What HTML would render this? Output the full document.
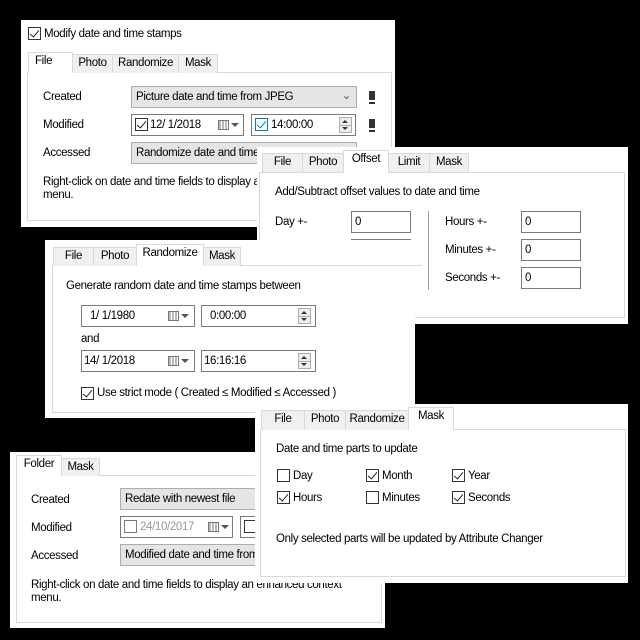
<!DOCTYPE html>
<html><head><meta charset="utf-8"><style>
*{box-sizing:border-box;margin:0;padding:0}
body{width:640px;height:640px;background:#000;position:relative;overflow:hidden;font-family:"Liberation Sans",sans-serif;font-size:11.5px;letter-spacing:-0.35px;color:#000}
.p{position:absolute;background:#fff}
.a{position:absolute;white-space:nowrap;line-height:14px}
.tab{position:absolute;background:#f0f0f0;border:1px solid #d9d9d9;border-bottom:none;text-align:center;line-height:17px;white-space:nowrap}
.tab.s{background:#fff;z-index:2;line-height:17px}
.box{position:absolute;border:1px solid #d9d9d9}
.cb{position:absolute;width:13px;height:13px;border:1px solid #333;background:#fff}
.cb.c::after{content:"";position:absolute;left:3px;top:0px;width:4px;height:8px;border:solid #222;border-width:0 1.3px 1.3px 0;transform:rotate(40deg)}
.cb.b{border-color:#0078d7}.cb.b.c::after{border-color:#0078d7}
.combo{position:absolute;background:#e5e5e5;border:1px solid #adadad;height:22px;line-height:20px;padding-left:4px;white-space:nowrap;overflow:hidden}
.inp{position:absolute;background:#fff;border:1px solid #7a7a7a;height:22px;line-height:20px;padding-left:4px;white-space:nowrap}
.cal{position:absolute;width:11px;height:10px;border:1px solid #777;background:repeating-linear-gradient(90deg,#bbb 0 2px,#fff 2px 3px)}
.tri{position:absolute;width:0;height:0;border-left:4px solid transparent;border-right:4px solid transparent;border-top:4px solid #555}
.spin{position:absolute;width:13px;height:16px;border:1px solid #adadad;background:#eee}
.spin::before{content:"";position:absolute;left:2px;top:2px;border-left:3px solid transparent;border-right:3px solid transparent;border-bottom:3px solid #333}
.spin::after{content:"";position:absolute;left:2px;top:9px;border-left:3px solid transparent;border-right:3px solid transparent;border-top:3px solid #333}
.spin i{position:absolute;left:0;right:0;top:7px;border-top:1px solid #adadad}
.mk{position:absolute;width:6px;height:11px;background:#333;border-bottom:2px solid #fff;box-shadow:0 2px 0 #333}
.num{position:absolute;border:1px solid #7a7a7a;background:#fff;width:60px;height:22px;line-height:20px;padding-left:3px}
</style></head><body>

<!-- Panel 1 -->
<div class="p" style="left:21px;top:20px;width:374px;height:207px"></div>
<div class="cb c" style="left:28px;top:27px"></div>
<div class="a" style="left:44px;top:27px">Modify date and time stamps</div>
<div class="box" style="left:27px;top:72px;width:365px;height:149px"></div>
<div class="tab s" style="left:28px;top:52px;width:45px;height:21px;text-align:left;padding-left:6px">File</div>
<div class="tab" style="left:72px;top:54px;width:41px;height:19px">Photo</div>
<div class="tab" style="left:112px;top:54px;width:67px;height:19px">Randomize</div>
<div class="tab" style="left:178px;top:54px;width:40px;height:19px">Mask</div>
<div class="a" style="left:43px;top:90px">Created</div>
<div class="combo" style="left:131px;top:86px;width:226px">Picture date and time from JPEG<span style="position:absolute;right:5px;top:-1px;color:#555">&#8964;</span></div>
<div class="mk" style="left:369px;top:91px"></div>
<div class="a" style="left:43px;top:118px">Modified</div>
<div class="inp" style="left:131px;top:114px;width:113px;padding-left:18px">12/ 1/2018</div>
<div class="cb c" style="left:135px;top:118px"></div>
<div class="cal" style="left:218px;top:120px"></div><div class="tri" style="left:231px;top:123px"></div>
<div class="inp" style="left:251px;top:114px;width:105px;padding-left:19px">14:00:00</div>
<div class="cb c b" style="left:255px;top:118px"></div>
<div class="spin" style="left:339px;top:117px"><i></i></div>
<div class="mk" style="left:369px;top:119px"></div>
<div class="a" style="left:43px;top:146px">Accessed</div>
<div class="combo" style="left:131px;top:142px;width:226px">Randomize date and time</div>
<div class="a" style="left:43px;top:176px;line-height:13px">Right-click on date and time fields to display an enhanced context<br>menu.</div>

<!-- Panel 2 Offset -->
<div class="p" style="left:257px;top:147px;width:371px;height:177px"></div>
<div class="box" style="left:259px;top:172px;width:366px;height:146px"></div>
<div class="tab" style="left:262px;top:153px;width:41px;height:19px">File</div>
<div class="tab" style="left:302px;top:153px;width:42px;height:19px">Photo</div>
<div class="tab s" style="left:343px;top:150px;width:46px;height:23px">Offset</div>
<div class="tab" style="left:388px;top:153px;width:42px;height:19px">Limit</div>
<div class="tab" style="left:429px;top:153px;width:40px;height:19px">Mask</div>
<div class="a" style="left:275px;top:185px">Add/Subtract offset values to date and time</div>
<div class="a" style="left:275px;top:215px">Day +-</div>
<div class="num" style="left:351px;top:211px">0</div>
<div class="num" style="left:351px;top:239px"></div>
<div style="position:absolute;left:428px;top:211px;width:1px;height:79px;background:#a0a0a0"></div>
<div class="a" style="left:445px;top:215px">Hours +-</div>
<div class="num" style="left:521px;top:211px">0</div>
<div class="a" style="left:445px;top:243px">Minutes +-</div>
<div class="num" style="left:521px;top:239px">0</div>
<div class="a" style="left:445px;top:271px">Seconds +-</div>
<div class="num" style="left:521px;top:267px">0</div>

<!-- Panel 3 Randomize -->
<div class="p" style="left:45px;top:240px;width:370px;height:178px"></div>
<div class="box" style="left:52px;top:265px;width:370px;height:148px;border-right:none"></div>
<div class="tab" style="left:53px;top:247px;width:41px;height:19px">File</div>
<div class="tab" style="left:93px;top:247px;width:44px;height:19px">Photo</div>
<div class="tab s" style="left:136px;top:244px;width:68px;height:22px">Randomize</div>
<div class="tab" style="left:203px;top:247px;width:38px;height:19px">Mask</div>
<div class="a" style="left:66px;top:279px">Generate random date and time stamps between</div>
<div class="inp" style="left:81px;top:305px;width:114px;padding-left:8px">1/ 1/1980</div>
<div class="cal" style="left:168px;top:311px"></div><div class="tri" style="left:181px;top:314px"></div>
<div class="inp" style="left:201px;top:305px;width:115px;padding-left:8px">0:00:00</div>
<div class="spin" style="left:298px;top:308px"><i></i></div>
<div class="a" style="left:81px;top:332px">and</div>
<div class="inp" style="left:81px;top:350px;width:114px;padding-left:2px">14/ 1/2018</div>
<div class="cal" style="left:168px;top:356px"></div><div class="tri" style="left:181px;top:359px"></div>
<div class="inp" style="left:201px;top:350px;width:115px;padding-left:2px">16:16:16</div>
<div class="spin" style="left:298px;top:353px"><i></i></div>
<div class="cb c" style="left:81px;top:387px"></div>
<div class="a" style="left:97px;top:386px">Use strict mode ( Created ≤ Modified ≤ Accessed )</div>

<!-- Panel 5 Folder -->
<div class="p" style="left:10px;top:452px;width:375px;height:176px"></div>
<div class="box" style="left:16px;top:475px;width:366px;height:148px"></div>
<div class="tab s" style="left:16px;top:455px;width:46px;height:21px">Folder</div>
<div class="tab" style="left:61px;top:458px;width:39px;height:18px">Mask</div>
<div class="a" style="left:31px;top:493px">Created</div>
<div class="combo" style="left:120px;top:488px;width:200px">Redate with newest file</div>
<div class="a" style="left:31px;top:521px">Modified</div>
<div class="inp" style="left:120px;top:516px;width:113px;padding-left:19px;color:#999">24/10/2017</div>
<div class="cb" style="left:124px;top:520px;border-color:#777"></div>
<div class="cal" style="left:208px;top:522px"></div><div class="tri" style="left:221px;top:525px"></div>
<div class="inp" style="left:240px;top:516px;width:60px"></div>
<div class="cb" style="left:244px;top:520px"></div>
<div class="a" style="left:31px;top:549px">Accessed</div>
<div class="combo" style="left:120px;top:544px;width:200px">Modified date and time from</div>
<div class="a" style="left:31px;top:579px;line-height:13px">Right-click on date and time fields to display an enhanced context<br>menu.</div>

<!-- Panel 4 Mask -->
<div class="p" style="left:255px;top:404px;width:373px;height:179px"></div>
<div class="box" style="left:260px;top:429px;width:366px;height:148px"></div>
<div class="tab" style="left:261px;top:410px;width:44px;height:20px">File</div>
<div class="tab" style="left:304px;top:410px;width:42px;height:20px">Photo</div>
<div class="tab" style="left:345px;top:410px;width:64px;height:20px">Randomize</div>
<div class="tab s" style="left:408px;top:407px;width:46px;height:23px">Mask</div>
<div class="a" style="left:276px;top:442px">Date and time parts to update</div>
<div class="cb" style="left:277px;top:469px"></div><div class="a" style="left:293px;top:469px">Day</div>
<div class="cb c" style="left:366px;top:469px"></div><div class="a" style="left:382px;top:469px">Month</div>
<div class="cb c" style="left:452px;top:469px"></div><div class="a" style="left:468px;top:469px">Year</div>
<div class="cb c" style="left:277px;top:491px"></div><div class="a" style="left:293px;top:491px">Hours</div>
<div class="cb" style="left:366px;top:491px"></div><div class="a" style="left:382px;top:491px">Minutes</div>
<div class="cb c" style="left:452px;top:491px"></div><div class="a" style="left:468px;top:491px">Seconds</div>
<div class="a" style="left:276px;top:532px">Only selected parts will be updated by Attribute Changer</div>
</body></html>
